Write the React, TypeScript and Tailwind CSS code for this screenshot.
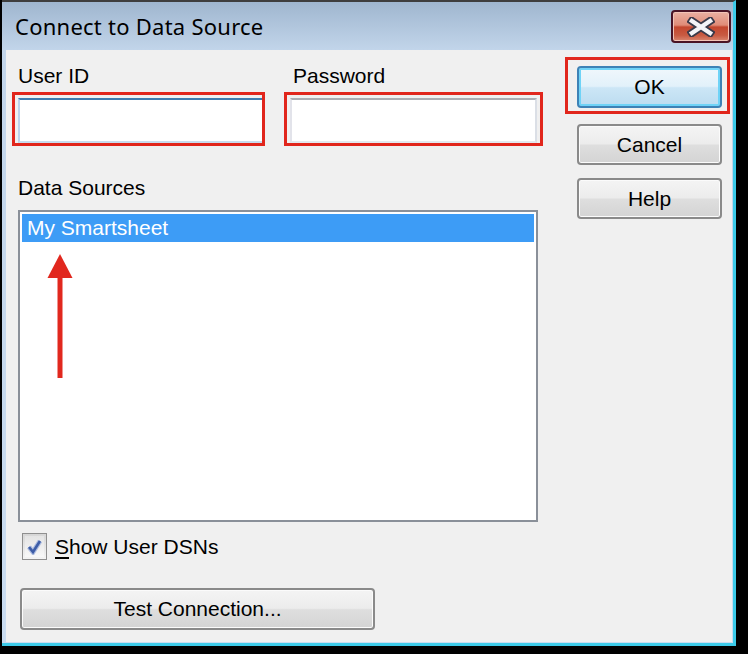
import React from "react";

const body = { fontFamily: '"Liberation Sans", Arial, sans-serif' };

function WinButton({ label, className = "" }: { label: React.ReactNode; className?: string }) {
  return (
    <div
      className={
        "flex items-center justify-center rounded-[4px] border-2 border-[#8a8a8a] bg-[linear-gradient(to_bottom,#f4f4f4_0%,#ececec_48%,#dedede_52%,#d4d4d4_100%)] shadow-[inset_0_0_0_1px_#fbfbfb] text-[21px] leading-[24px] text-black " +
        className
      }
    >
      {label}
    </div>
  );
}

export default function App() {
  return (
    <div className="w-[748px] h-[654px] bg-black overflow-hidden" style={body}>
      <div className="ml-[2px] w-[734px] h-[646px] flex flex-col border-t-2 border-t-[#3e3e3e] border-r-[3px] border-r-[#3ccbe9] border-b-[3px] border-b-[#3ccbe9] bg-[linear-gradient(to_bottom,#9fb6cf_0px,#c2d5ea_48px,#cadcf0_100%)]">
        {/* Title bar */}
        <div className="h-[48px] flex items-start justify-between shrink-0">
          <div
            className="ml-[13px] pt-[9px] text-[22px] leading-[30px] text-black tracking-[0.25px]"
            style={{ fontFamily: '"Noto Sans", "Open Sans", sans-serif' }}
          >
            Connect to Data Source
          </div>
          <div className="mt-[8px] mr-[2px] w-[60px] h-[33px] rounded-[4px] border-2 border-[#4a1426] bg-[linear-gradient(to_bottom,#eab0a2_0%,#e08c78_45%,#c4472f_52%,#c85a42_80%,#d98670_100%)] shadow-[inset_0_0_0_1px_#f2c4b8] flex items-center justify-center">
            <svg width="28" height="20" viewBox="0 0 28 20">
              <path d="M5 4 L23 16 M23 4 L5 16" stroke="#3a3a4a" strokeWidth="8" strokeLinecap="square" />
              <path d="M5 4 L23 16 M23 4 L5 16" stroke="#f4f4f8" strokeWidth="4.5" strokeLinecap="square" />
            </svg>
          </div>
        </div>

        {/* Content */}
        <div className="flex-1 pl-[4px] pr-[1px] pb-[1px]">
          <div className="relative h-full bg-[#f0f0f0] flex pl-[6px]">
            {/* Left column */}
            <div className="w-[531px] flex flex-col pt-[14px]">
              <div className="flex gap-[19px]">
                <div className="w-[253px] flex flex-col">
                  <div className="pl-[6px] text-[21px] leading-[24px] text-black">User ID</div>
                  <div className="mt-[4px] h-[54px] border-[3px] border-[#e1261c] pl-[3px] pt-[3px]">
                    <div className="h-full bg-white border-t-2 border-t-[#3f7db0] border-l-2 border-l-[#bcd3ea] border-b-2 border-b-[#c8dcee]" />
                  </div>
                </div>
                <div className="w-[259px] flex flex-col">
                  <div className="pl-[9px] text-[21px] leading-[24px] text-black">Password</div>
                  <div className="mt-[4px] h-[54px] border-[3px] border-[#e1261c] pl-[3px] pt-[3px] pr-[3px]">
                    <div className="h-full bg-white border-t-2 border-t-[#abadb3] border-l-2 border-l-[#e2e3ea] border-r-2 border-r-[#dbdfe6] border-b-2 border-b-[#e3e9ef]" />
                  </div>
                </div>
              </div>

              <div className="mt-[30px] pl-[6px] text-[21px] leading-[24px] text-black">Data Sources</div>

              <div className="mt-[10px] ml-[6px] w-[520px] h-[312px] border-2 border-[#8a9099] bg-white p-[2px]">
                <div className="h-[28px] bg-[#3d9cf6] pl-[5px] text-[21px] leading-[28px] text-white">My Smartsheet</div>
              </div>

              <div className="mt-[11px] ml-[10px] flex items-center gap-[8px]">
                <div className="w-[25px] h-[27px] border border-[#8f8f8f] bg-[linear-gradient(to_bottom,#d6d6d6,#f4f4f4)] p-[2px]">
                  <div className="w-full h-full bg-[linear-gradient(to_bottom,#e4e4e4,#f8f8f8)] flex items-center justify-center">
                    <svg width="17" height="17" viewBox="0 0 17 17">
                      <path d="M3 9 L7 14 L14 3" fill="none" stroke="#aebde0" strokeWidth="5" />
                      <path d="M3 9 L7 14 L14 3" fill="none" stroke="#3e5ea8" strokeWidth="2.6" />
                    </svg>
                  </div>
                </div>
                <div className="text-[21px] leading-[24px] text-black">
                  <span className="underline underline-offset-[3px]">S</span>how User DSNs
                </div>
              </div>

              <WinButton label="Test Connection..." className="mt-[28px] ml-[8px] w-[355px] h-[42px]" />
            </div>

            {/* Right column */}
            <div className="ml-[22px] w-[165px] flex flex-col pt-[7px]">
              <div className="h-[57px] border-[3px] border-[#e1261c] pl-[9px] pt-[6px]">
                <div className="w-[145px] h-[42px] rounded-[4px] border-2 border-[#3d82b6] bg-[linear-gradient(to_bottom,#f0f7fc_0%,#e2f1fa_48%,#cce6f6_52%,#bcdcf0_100%)] shadow-[inset_0_0_0_2px_#6fd3f7] flex items-center justify-center text-[21px] leading-[24px] text-black">
                  OK
                </div>
              </div>
              <WinButton label="Cancel" className="mt-[10px] ml-[12px] w-[145px] h-[41px]" />
              <WinButton label="Help" className="mt-[13px] ml-[12px] w-[145px] h-[41px]" />
            </div>

            {/* Annotation arrow */}
            <svg className="absolute left-[38px] top-[202px]" width="32" height="130" viewBox="0 0 32 130">
              <polygon points="16,2 28.5,26 3.5,26" fill="#e1281e" />
              <rect x="13.5" y="25" width="5" height="101" fill="#e1281e" />
            </svg>
          </div>
        </div>
      </div>
    </div>
  );
}
